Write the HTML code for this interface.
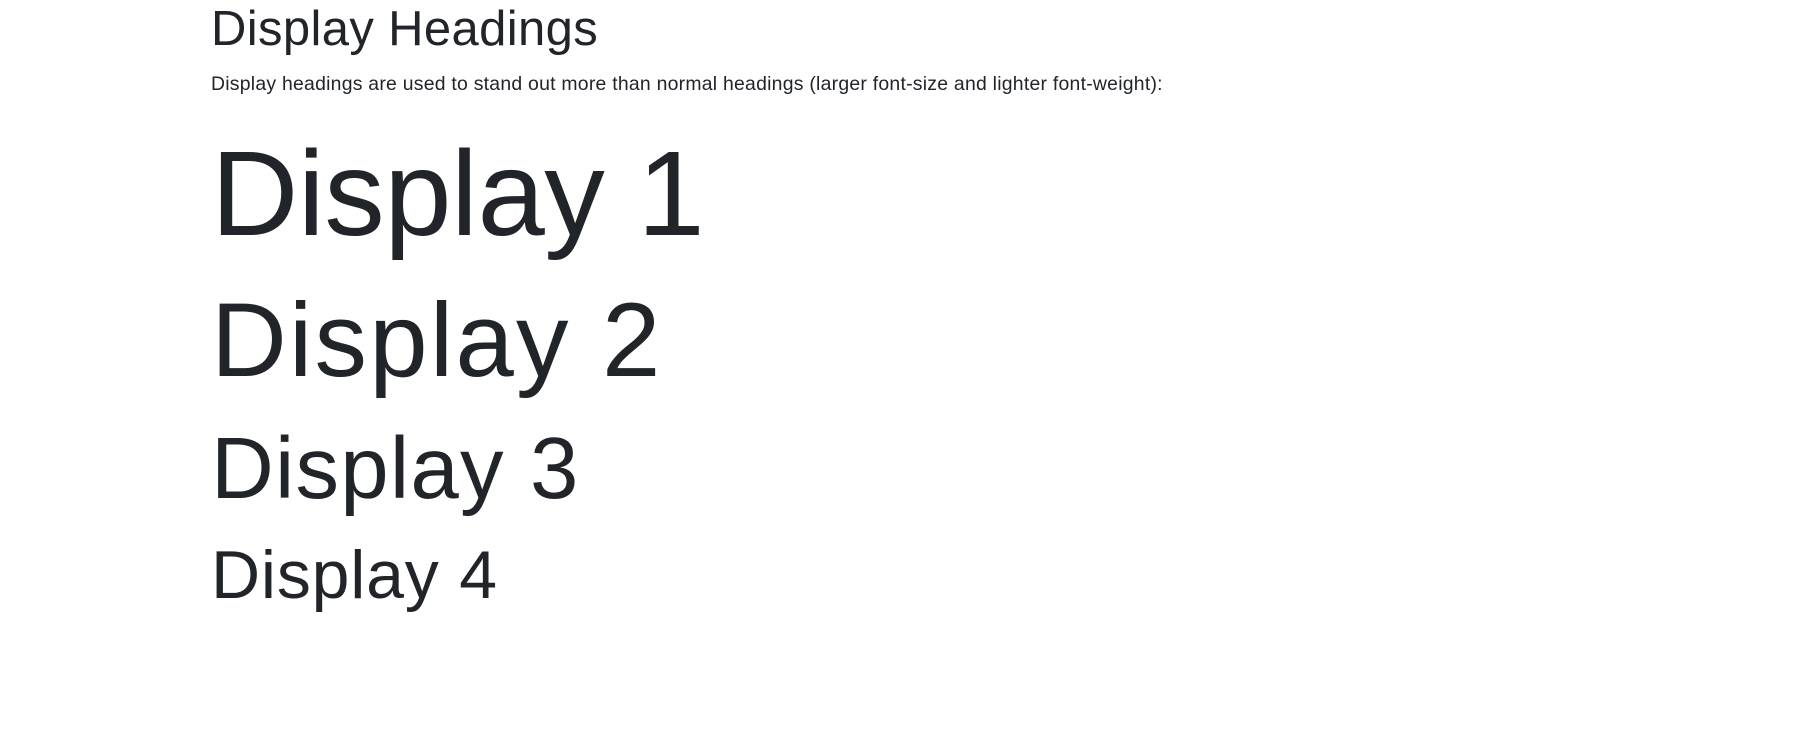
<!DOCTYPE html>
<html><head><meta charset="utf-8"><style>
html,body{margin:0;padding:0;background:#fff;width:1809px;height:740px;overflow:hidden}
div{position:absolute;left:211px;margin:0;color:#212529;font-family:"Liberation Sans",sans-serif;line-height:1;white-space:nowrap}
</style></head><body>
<div style="top:4.5px;font-size:49px;letter-spacing:0.36px">Display Headings</div>
<div style="top:74.6px;font-size:19.4px;letter-spacing:0.25px">Display headings are used to stand out more than normal headings (larger font-size and lighter font-weight):</div>
<div style="top:132.6px;font-size:121px;letter-spacing:-0.5px">Display 1</div>
<div style="top:288px;font-size:105px;letter-spacing:2.2px">Display 2</div>
<div style="top:425.4px;font-size:87px;letter-spacing:1.2px">Display 3</div>
<div style="top:541.4px;font-size:68px;letter-spacing:0.8px">Display 4</div>
</body></html>
